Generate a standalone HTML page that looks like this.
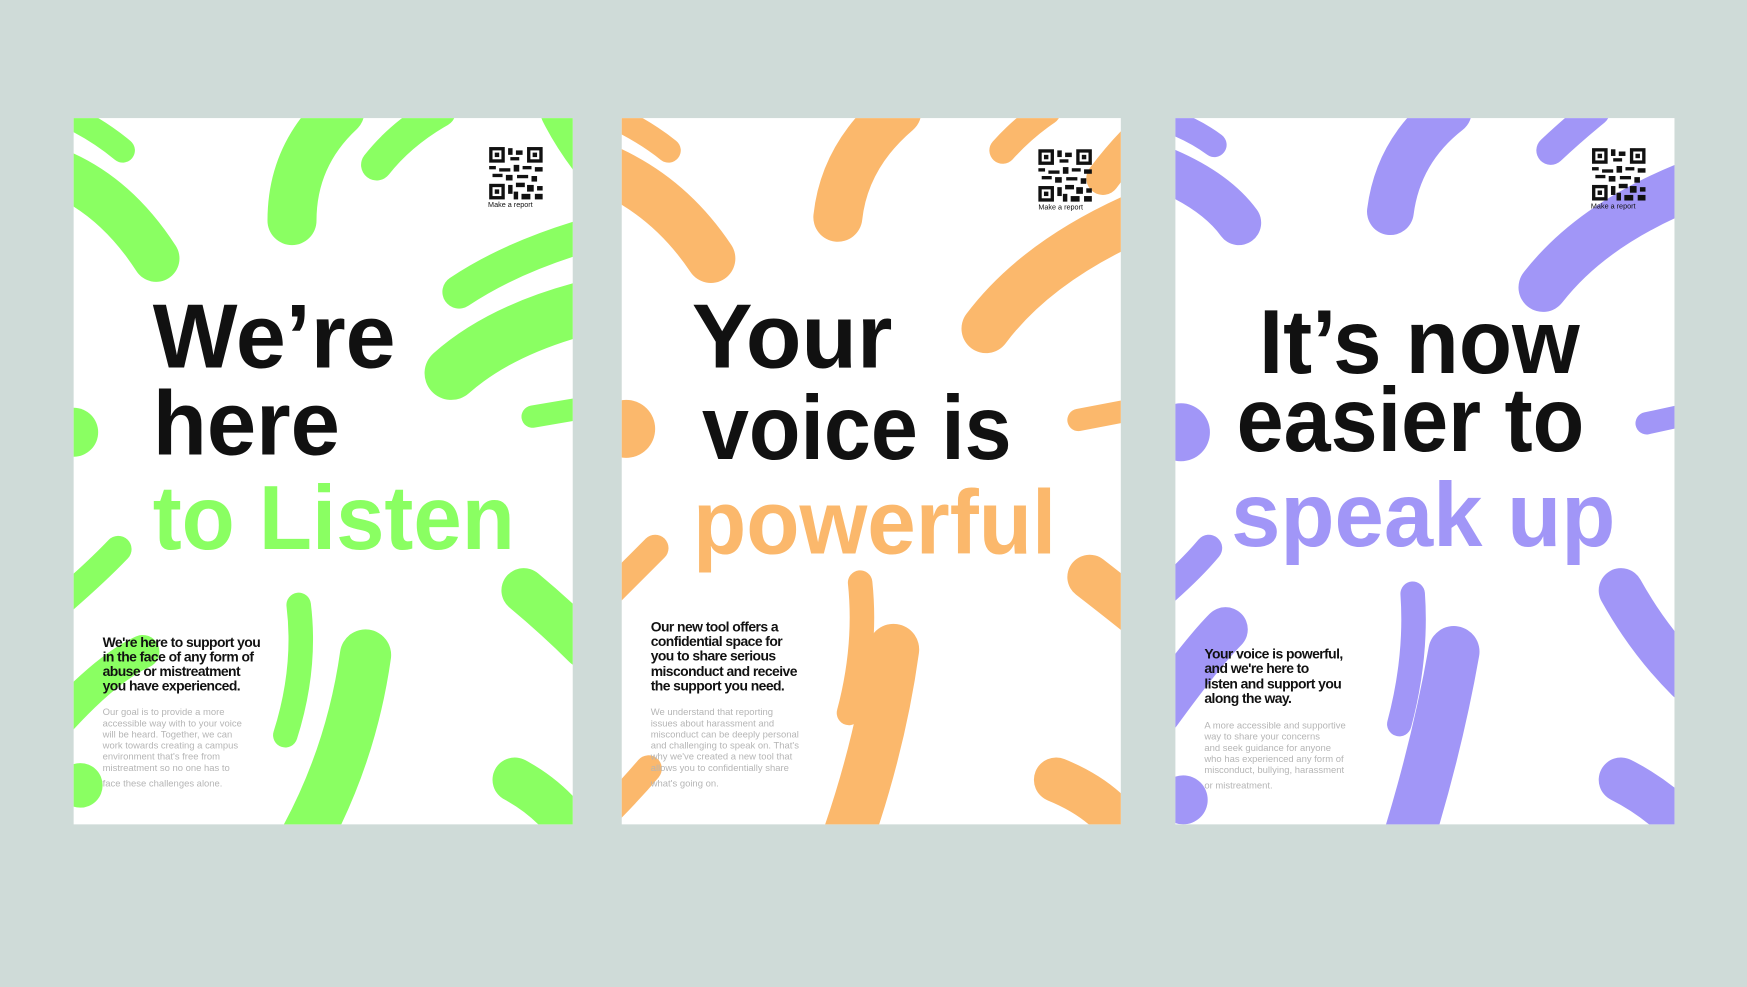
<!DOCTYPE html>
<html><head><meta charset="utf-8"><style>
html,body{margin:0;padding:0;background:#cfdbd8;}
svg{display:block}
.h{font-family:"Liberation Sans",sans-serif;font-weight:bold;font-size:82px;}
.b{font-family:"Liberation Sans",sans-serif;font-weight:bold;font-size:12.5px;fill:#111;letter-spacing:-0.5px}
.g{font-family:"Liberation Sans",sans-serif;font-size:8.5px;fill:#b5b5b5}
.m{font-family:"Liberation Sans",sans-serif;font-size:6.5px;fill:#111}
</style></head><body>
<svg width="1747" height="987" viewBox="0 0 1568 886" xmlns="http://www.w3.org/2000/svg">
<defs>
<clipPath id="c1"><rect x="66" y="106" width="448" height="634"/></clipPath>
<clipPath id="c2"><rect x="558" y="106" width="448" height="634"/></clipPath>
<clipPath id="c3"><rect x="1055" y="106" width="448" height="634"/></clipPath>
<g id="qr" fill="#111">
<rect x="0" y="0" width="14" height="14"/><rect x="3" y="3" width="8" height="8" fill="#fff"/><rect x="5" y="5" width="4" height="4"/>
<rect x="34" y="0" width="14" height="14"/><rect x="37" y="3" width="8" height="8" fill="#fff"/><rect x="39" y="5" width="4" height="4"/>
<rect x="0" y="33" width="14" height="14"/><rect x="3" y="36" width="8" height="8" fill="#fff"/><rect x="5" y="38" width="4" height="4"/>
<rect x="17" y="1" width="4" height="6"/><rect x="24" y="3" width="6" height="4"/><rect x="19" y="9" width="8" height="3"/>
<rect x="0" y="17" width="6" height="3"/><rect x="9" y="19" width="10" height="3"/><rect x="22" y="16" width="5" height="6"/>
<rect x="30" y="17" width="8" height="3"/><rect x="41" y="18" width="7" height="4"/><rect x="3" y="24" width="9" height="3"/>
<rect x="15" y="25" width="6" height="5"/><rect x="25" y="25" width="10" height="3"/><rect x="38" y="26" width="5" height="5"/>
<rect x="17" y="34" width="4" height="8"/><rect x="24" y="32" width="8" height="4"/><rect x="34" y="34" width="6" height="6"/>
<rect x="43" y="35" width="5" height="4"/><rect x="22" y="40" width="4" height="7"/><rect x="29" y="42" width="8" height="5"/><rect x="41" y="42" width="7" height="5"/>
</g>
</defs>
<rect width="1568" height="886" fill="#cfdbd8"/>

<!-- Poster 1 -->
<rect x="66" y="106" width="448" height="634" fill="#fff"/>
<g clip-path="url(#c1)" fill="none" stroke="#8aff62" stroke-linecap="round">
<path d="M40 150 Q100 170 140 232" stroke-width="42"/>
<path d="M40 95 Q80 110 110 135" stroke-width="22"/>
<path d="M305 100 Q262 140 262 198" stroke-width="44"/>
<path d="M338 148 Q360 120 395 100" stroke-width="28"/>
<path d="M505 100 Q515 120 530 140" stroke-width="40"/>
<path d="M412 262 Q460 230 530 210" stroke-width="30"/>
<path d="M405 335 Q450 295 530 275" stroke-width="48"/>
<path d="M478 374 L525 366" stroke-width="20"/>
<circle cx="66" cy="388" r="22" fill="#8aff62" stroke="none"/>
<path d="M50 545 Q85 515 106 493" stroke-width="24"/>
<path d="M50 650 Q95 600 128 585" stroke-width="30"/>
<circle cx="72" cy="705" r="20" fill="#8aff62" stroke="none"/>
<path d="M268 543 Q275 600 256 660" stroke-width="22"/>
<path d="M328 588 Q315 680 270 760" stroke-width="46"/>
<path d="M470 530 Q500 555 525 580" stroke-width="40"/>
<path d="M462 700 Q490 715 510 740" stroke-width="40"/>
</g>
<use href="#qr" x="439" y="132"/>
<text class="m" x="438" y="186">Make a report</text>
<text class="h" fill="#111" x="137" y="330" textLength="218" lengthAdjust="spacingAndGlyphs">We’re</text>
<text class="h" fill="#111" x="137" y="408" textLength="168" lengthAdjust="spacingAndGlyphs">here</text>
<text class="h" fill="#8aff62" x="137" y="493" textLength="325" lengthAdjust="spacingAndGlyphs">to Listen</text>
<text class="b" x="92" y="581">We're here to support you</text>
<text class="b" x="92" y="594">in the face of any form of</text>
<text class="b" x="92" y="607">abuse or mistreatment</text>
<text class="b" x="92" y="620">you have experienced.</text>
<g class="g"><text x="92" y="642">Our goal is to provide a more</text><text x="92" y="652">accessible way with to your voice</text><text x="92" y="662">will be heard. Together, we can</text><text x="92" y="672">work towards creating a campus</text><text x="92" y="682">environment that's free from</text><text x="92" y="692">mistreatment so no one has to</text><text x="92" y="706">face these challenges alone.</text></g>

<!-- Poster 2 -->
<rect x="558" y="106" width="448" height="634" fill="#fff"/>
<g clip-path="url(#c2)" fill="none" stroke="#fbb86c" stroke-linecap="round">
<path d="M540 150 Q600 175 638 232" stroke-width="44"/>
<path d="M540 100 Q575 115 600 135" stroke-width="22"/>
<path d="M805 100 Q758 140 752 195" stroke-width="44"/>
<path d="M900 135 Q918 115 940 100" stroke-width="24"/>
<path d="M885 295 Q930 235 1020 195" stroke-width="44"/>
<path d="M990 160 Q1005 140 1020 125" stroke-width="30"/>
<path d="M968 377 L1015 368" stroke-width="20"/>
<circle cx="562" cy="385" r="26" fill="#fbb86c" stroke="none"/>
<path d="M545 535 Q570 510 588 492" stroke-width="24"/>
<path d="M545 730 Q565 710 582 690" stroke-width="24"/>
<path d="M772 523 Q778 580 762 640" stroke-width="22"/>
<path d="M802 583 Q790 670 758 760" stroke-width="46"/>
<path d="M978 518 Q1000 535 1025 555" stroke-width="40"/>
<path d="M948 700 Q985 715 1005 740" stroke-width="40"/>
</g>
<use href="#qr" x="932" y="134"/>
<text class="m" x="932" y="188">Make a report</text>
<text class="h" fill="#111" x="621" y="330" textLength="180" lengthAdjust="spacingAndGlyphs">Your</text>
<text class="h" fill="#111" x="630" y="412" textLength="278" lengthAdjust="spacingAndGlyphs">voice is</text>
<text class="h" fill="#fbb86c" x="622" y="497" textLength="326" lengthAdjust="spacingAndGlyphs">powerful</text>
<text class="b" x="584" y="567">Our new tool offers a</text>
<text class="b" x="584" y="580">confidential space for</text>
<text class="b" x="584" y="593">you to share serious</text>
<text class="b" x="584" y="607">misconduct and receive</text>
<text class="b" x="584" y="620">the support you need.</text>
<g class="g"><text x="584" y="642">We understand that reporting</text><text x="584" y="652">issues about harassment and</text><text x="584" y="662">misconduct can be deeply personal</text><text x="584" y="672">and challenging to speak on. That's</text><text x="584" y="682">why we've created a new tool that</text><text x="584" y="692">allows you to confidentially share</text><text x="584" y="706">what's going on.</text></g>

<!-- Poster 3 -->
<rect x="1055" y="106" width="448" height="634" fill="#fff"/>
<g clip-path="url(#c3)" fill="none" stroke="#a196f7" stroke-linecap="round">
<path d="M1040 150 Q1090 170 1112 200" stroke-width="40"/>
<path d="M1040 105 Q1070 115 1090 130" stroke-width="22"/>
<path d="M1300 100 Q1255 135 1248 190" stroke-width="42"/>
<path d="M1392 135 Q1410 118 1432 100" stroke-width="26"/>
<path d="M1385 258 Q1430 200 1520 165" stroke-width="44"/>
<path d="M1478 380 L1515 372" stroke-width="20"/>
<circle cx="1060" cy="388" r="26" fill="#a196f7" stroke="none"/>
<path d="M1045 532 Q1070 510 1085 492" stroke-width="24"/>
<path d="M1040 640 Q1080 585 1100 565" stroke-width="40"/>
<circle cx="1062" cy="718" r="22" fill="#a196f7" stroke="none"/>
<path d="M1268 533 Q1272 590 1256 650" stroke-width="22"/>
<path d="M1305 585 Q1290 670 1262 760" stroke-width="46"/>
<path d="M1455 530 Q1480 575 1515 610" stroke-width="40"/>
<path d="M1455 700 Q1485 715 1510 740" stroke-width="40"/>
</g>
<use href="#qr" x="1429" y="133"/>
<text class="m" x="1428" y="187">Make a report</text>
<text class="h" fill="#111" x="1130" y="335" textLength="288" lengthAdjust="spacingAndGlyphs">It’s now</text>
<text class="h" fill="#111" x="1110" y="405" textLength="312" lengthAdjust="spacingAndGlyphs">easier to</text>
<text class="h" fill="#a196f7" x="1105" y="490" textLength="345" lengthAdjust="spacingAndGlyphs">speak up</text>
<text class="b" x="1081" y="591">Your voice is powerful,</text>
<text class="b" x="1081" y="604">and we're here to</text>
<text class="b" x="1081" y="618">listen and support you</text>
<text class="b" x="1081" y="631">along the way.</text>
<g class="g"><text x="1081" y="654">A more accessible and supportive</text><text x="1081" y="664">way to share your concerns</text><text x="1081" y="674">and seek guidance for anyone</text><text x="1081" y="684">who has experienced any form of</text><text x="1081" y="694">misconduct, bullying, harassment</text><text x="1081" y="708">or mistreatment.</text></g>
</svg>
</body></html>
